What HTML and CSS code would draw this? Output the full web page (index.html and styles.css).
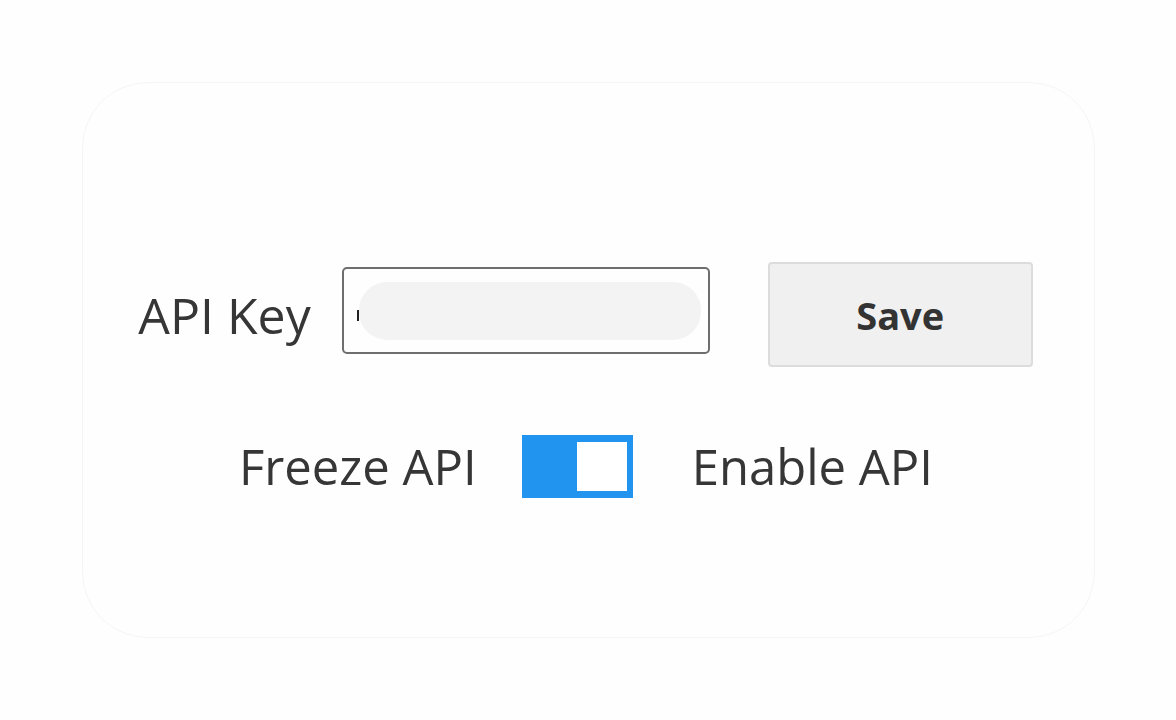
FILE: index.html
```html
<!DOCTYPE html>
<html lang="en">
<head>
  <meta charset="UTF-8" />
  <meta name="viewport" content="width=device-width, initial-scale=1.0"/>
  <title>API Settings</title>
  <link rel="stylesheet" href="styles.css">
</head>
<body>
  <section class="card">
    <div class="row key-row">
      <label class="label" for="apiKey">API Key</label>
      <div class="key-input">
        <span class="caret"></span>
        <span class="key-mask"></span>
      </div>
      <button type="button" class="save-btn">Save</button>
    </div>

    <div class="row toggle-row">
      <span class="label">Freeze API</span>
      <div class="toggle">
        <span class="knob"></span>
      </div>
      <span class="label">Enable API</span>
    </div>
  </section>
</body>
</html>
```

FILE: styles.css
```css
* { margin: 0; padding: 0; box-sizing: border-box; font-family: 'Open Sans', 'Noto Sans', sans-serif; }
body { background: #fefefe; color: #363636; padding: 82px 82px 0 82px; }

.card {
  width: 1013px; height: 556px;
  border: 1px solid #f5f5f5; border-radius: 66px;
  padding-top: 179px;
  display: flex; flex-direction: column; align-items: center; gap: 68px;
}

.row { display: flex; align-items: center; }
.label { font-size: 49px; line-height: 1; color: #363636; }

.key-row { margin-left: -6px; }
.key-row .label { font-size: 50px; margin-right: 31px; }

.key-input {
  width: 368px; height: 87px;
  border: 2px solid #6e6e6e; border-radius: 5px;
  display: flex; align-items: center; padding-left: 13px;
  margin: 0 58px 8px 0;
}
.caret { width: 2px; height: 11px; background: #222; margin-top: 10px; }
.key-mask {
  width: 342px; height: 58px;
  background: #f3f3f3; border-radius: 28px;
}

.save-btn {
  width: 265px; height: 105px;
  background: #f0f0f0; border: 2px solid #dcdcdc; border-radius: 4px;
  font-size: 38px; font-weight: 700; color: #333;
  cursor: pointer;
}

.toggle-row { margin-left: -5px; }
.toggle {
  width: 111px; height: 63px;
  background: #2194f0;
  display: flex; align-items: center; justify-content: flex-end;
  padding-right: 6px;
  margin: 0 59px 0 45px;
}
.knob { width: 50px; height: 49px; background: #fff; }
```
